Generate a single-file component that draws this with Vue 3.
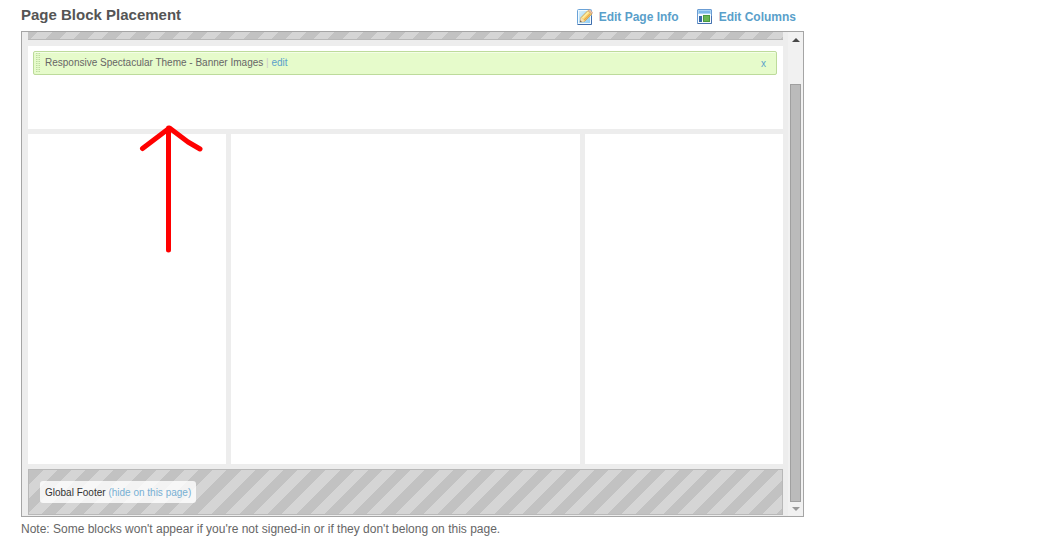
<script setup>
const columns = ['left', 'middle', 'right']
</script>

<template>
  <main class="page">
    <header class="head">
      <h1>Page Block Placement</h1>
      <nav class="tools">
        <a href="#info">
          <svg width="16" height="18" viewBox="0 0 16 18" aria-hidden="true">
            <defs>
              <linearGradient id="sheet" x2="1" y2="1"><stop stop-color="#d4effc" /><stop offset="1" stop-color="#93cdf3" /></linearGradient>
            </defs>
            <rect x=".5" y="1.5" width="14" height="15" rx="1" fill="#f2faff" stroke="#6aa3d8" />
            <rect x="2" y="3" width="11" height="12" fill="url(#sheet)" />
            <path d="M.5 16.5h14V8" fill="none" stroke="#3f6ead" />
            <path d="M4 9.500l7-7 4 3.500-7.500 7.500L3.200 14z" fill="#f9d777" stroke="#c4964f" stroke-width=".7" />
            <path d="M5.500 10l6-6" stroke="#fff0a7" stroke-width="1.300" />
            <path d="M7.200 12l6-6" stroke="#eba94a" stroke-width="1.200" />
            <path d="M11 2.500l1.300-1 3.200 2.700-.5 1.800z" fill="#eec2a8" stroke="#c99878" stroke-width=".5" />
            <path d="M4 9.500l3.500 4L3.200 14z" fill="#f7dfb8" />
            <path d="M3.400 12.300l1.400 1.400-1.600.3z" fill="#493d38" />
          </svg>
          <span>Edit Page Info</span>
        </a>
        <a href="#columns">
          <svg width="16" height="16" viewBox="0 0 16 16" aria-hidden="true">
            <rect x=".5" y=".5" width="14" height="14" rx=".5" fill="#f7fbff" stroke="#6b9cd3" />
            <path d="M.5 14.500h14V7" fill="none" stroke="#4672b0" />
            <rect x="1" y="1" width="13" height="4" fill="#a9d4f4" />
            <rect x="2" y="2" width="11" height="2" fill="#7db8ea" />
            <rect x="2" y="7" width="3" height="6" fill="#3868a7" />
            <rect x="6.500" y="6.500" width="6" height="6" fill="#68b653" stroke="#4b9a40" />
          </svg>
          <span>Edit Columns</span>
        </a>
      </nav>
    </header>

    <section class="frame" aria-label="Page blocks">
      <div class="canvas">
        <div class="stripes top"></div>
        <div class="banner">
          <div class="block">
            <svg class="grip" width="4" height="20" viewBox="0 0 4 20" aria-hidden="true">
              <path d="M.5 0v20M3.500 0v20M2 0v20" stroke="#bddb9f" stroke-dasharray="1 1" />
            </svg>
            <span class="name">Responsive Spectacular Theme - Banner Images <i>|</i> <a href="#edit">edit</a></span>
            <button type="button" aria-label="Remove block">x</button>
          </div>
        </div>
        <div class="columns">
          <div v-for="c in columns" :key="c"></div>
        </div>
        <div class="stripes footer">
          <div class="label">Global Footer <a href="#hide">(hide on this page)</a></div>
        </div>
      </div>
      <div class="scroll" aria-hidden="true">
        <svg width="8" height="4" viewBox="0 0 8 4"><path d="M0 4l4-4 4 4z" fill="#484848" /></svg>
        <div class="thumb"></div>
        <svg width="8" height="4" viewBox="0 0 8 4"><path d="M0 0h8L4 4z" fill="#999" /></svg>
      </div>
      <svg class="arrow" width="64" height="130" viewBox="0 0 64 130" aria-hidden="true">
        <path d="M29.500 126V4M3.500 24.500L30.500 4 49 18 61 25" fill="none" stroke="#f00" stroke-width="5" stroke-linecap="round" stroke-linejoin="round" />
      </svg>
    </section>
    <p class="note">Note: Some blocks won't appear if you're not signed-in or if they don't belong on this page.</p>
  </main>
</template>

<style>
body { background: #fff; }
</style>

<style scoped>
.page {
  max-width: 783px;
  margin-left: 21px;
  font-family: "Liberation Sans", Arial, sans-serif;
  color: #666;
}
a { color: #5a9fca; text-decoration: none; }
.head { display: flex; justify-content: space-between; height: 31px; }
h1 { margin: 6px 0 0; font-size: 15px; line-height: 18px; color: #555; }
.tools { display: flex; gap: 18px; padding: 8px 8px 0 0; font-size: 12px; font-weight: bold; line-height: 18px; }
.tools a { display: flex; align-items: center; gap: 6px; height: 18px; }
.frame {
  position: relative;
  display: flex;
  border: 1px solid #a5a5a5;
  background: #ededed;
}
.canvas { flex: 1; display: flex; flex-direction: column; padding: 0 5px 1px 6px; }
.stripes {
  border: 1px solid #b8b8b8;
  background: repeating-linear-gradient(135deg, #c2c2c2 0 10px, #d5d5d5 10px 20px);
}
.top {
  height: 7px;
  border-width: 0 0 1px;
  margin-bottom: 6px;
  background: repeating-linear-gradient(135deg, #c2c2c2 0 7px, #d5d5d5 7px 17px, #c2c2c2 17px 20px);
}
.banner { height: 73px; padding: 5px 6px 5px 5px; margin-bottom: 5px; background: #fff; }
.block {
  display: flex;
  align-items: center;
  height: 20px;
  padding: 1px 9px 1px 2px;
  border: 1px solid #bddb9b;
  border-radius: 2px;
  background: #e6fbcb;
  box-shadow: inset 0 1px #f4fee8;
  font-size: 10px;
}
.name { flex: 1; margin-left: 5px; line-height: 20px; }
.name i { color: #ccc; font-style: normal; }
button { padding: 1px 1px 0; border: 0; background: none; color: #5a9fca; font: inherit; line-height: 20px; }
.columns { display: grid; grid-template-columns: 198fr 349fr 198fr; gap: 5px; height: 330px; margin-bottom: 5px; }
.columns div { background: #fff; }
.footer { padding: 11px; }
.label {
  width: max-content;
  padding: 1px 5px 0;
  border-radius: 3px;
  background: rgba(255, 255, 255, 0.8);
  color: #333;
  font-size: 10px;
  line-height: 21px;
}
.label a { color: #77b0d4; }
.scroll {
  display: flex;
  flex-direction: column;
  align-items: center;
  width: 15px;
  padding: 6px 0 5px;
  background: #f1f1f1;
}
.thumb { flex: 1; width: 9px; margin: 42px 0 5px; border: 1px solid #a0a0a0; background: #bbb; }
.arrow { position: absolute; left: 117px; top: 92px; }
.note { margin: 4px 0 0; font-size: 12px; line-height: 16px; }
</style>
